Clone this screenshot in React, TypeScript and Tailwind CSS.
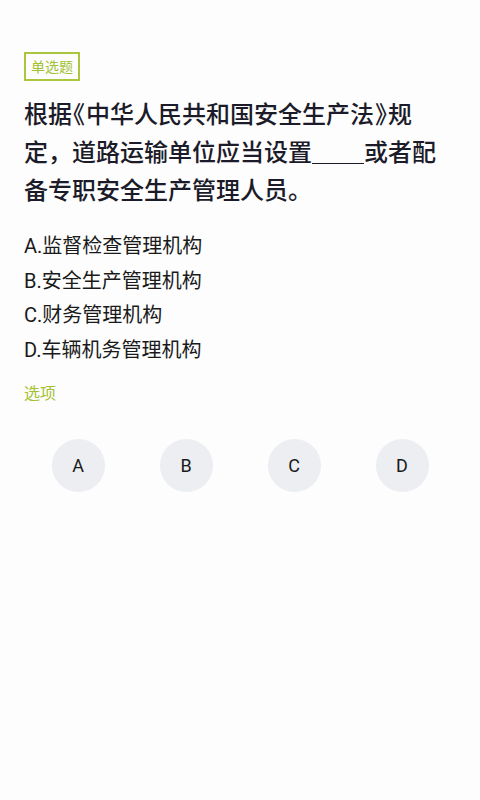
import React from "react";

const cjk = { fontFamily: '"Noto Sans CJK SC", "Noto Sans", sans-serif' };
const opt = { fontFamily: 'Roboto, "Noto Sans CJK SC", sans-serif' };

export default function App() {
  const options = ["A.监督检查管理机构", "B.安全生产管理机构", "C.财务管理机构", "D.车辆机务管理机构"];
  return (
    <div className="w-[480px] h-[800px] bg-[#fdfdfd] px-6 pt-[52px]" style={cjk}>
      <div className="flex">
        <span className="border-2 border-[#a9c63c] text-[#a3c232] text-[14px] leading-[25px] px-[5px]">单选题</span>
      </div>
      <div className="mt-[13px] text-[24px] leading-[38px] font-medium text-[#1b1b29] whitespace-nowrap">
        根据<span className="[font-feature-settings:'halt'] ml-[1px] mr-[1px]">《</span>中华人民共和国安全生产法<span className="[font-feature-settings:'halt'] ml-[1px] mr-[1px]">》</span>规
        <br />
        定，道路运输单位应当设置<span className="inline-block w-[52px] h-[25px] border-b-[1.5px] border-[#1b1b29] align-[-3px]"></span>或者配
        <br />
        备专职安全生产管理人员。
      </div>
      <div className="mt-[21px] flex flex-col text-[20px] leading-[34.5px] text-[#1a1a1a]" style={opt}>
        {options.map((o) => (
          <div key={o}>{o}</div>
        ))}
      </div>
      <div className="mt-[13px] text-[16px] leading-[24px] text-[#a3c232]">选项</div>
      <div className="mt-[35px] grid grid-cols-4">
        {["A", "B", "C", "D"].map((l) => (
          <div key={l} className="flex justify-center">
            <div className="w-[53px] h-[53px] rounded-full bg-[#eceef1] flex items-center justify-center text-[18px] text-[#1a1a1a]" style={opt}>
              {l}
            </div>
          </div>
        ))}
      </div>
    </div>
  );
}
